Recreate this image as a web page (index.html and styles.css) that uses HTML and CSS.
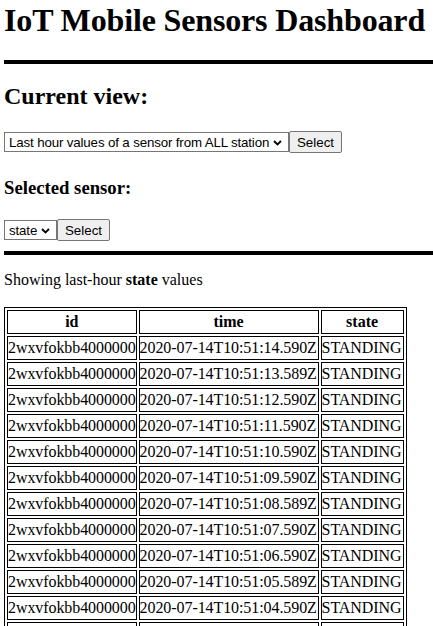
FILE: index.html
```html
<!DOCTYPE html>
<html>
<head>
<meta charset="utf-8">
<link rel="stylesheet" href="styles.css">
</head>
<body>
<h1 class="title">IoT Mobile Sensors Dashboard</h1>
<hr class="rule">
<h2 class="heading">Current view:</h2>
<form class="picker picker-1">
  <span class="select-wrap wide">
    <select class="dropdown"><option>Last hour values of a sensor from ALL station</option></select>
    <svg class="chev" width="9" height="6" viewBox="0 0 9 6"><path d="M1 1 L4.5 4.5 L8 1" fill="none" stroke="#000" stroke-width="1.8"/></svg>
  </span><button type="button" class="btn">Select</button>
</form>
<h3 class="subheading">Selected sensor:</h3>
<form class="picker picker-2">
  <span class="select-wrap narrow">
    <select class="dropdown"><option>state</option></select>
    <svg class="chev" width="9" height="6" viewBox="0 0 9 6"><path d="M1 1 L4.5 4.5 L8 1" fill="none" stroke="#000" stroke-width="1.8"/></svg>
  </span><button type="button" class="btn">Select</button>
</form>
<hr class="rule rule-2">
<p class="caption">Showing last-hour <b>state</b> values</p>
<table class="data">
  <tr><th class="c-id">id</th><th class="c-time">time</th><th class="c-state">state</th></tr>
  <tr><td>2wxvfokbb4000000</td><td>2020-07-14T10:51:14.590Z</td><td>STANDING</td></tr>
  <tr><td>2wxvfokbb4000000</td><td>2020-07-14T10:51:13.589Z</td><td>STANDING</td></tr>
  <tr><td>2wxvfokbb4000000</td><td>2020-07-14T10:51:12.590Z</td><td>STANDING</td></tr>
  <tr><td>2wxvfokbb4000000</td><td>2020-07-14T10:51:11.590Z</td><td>STANDING</td></tr>
  <tr><td>2wxvfokbb4000000</td><td>2020-07-14T10:51:10.590Z</td><td>STANDING</td></tr>
  <tr><td>2wxvfokbb4000000</td><td>2020-07-14T10:51:09.590Z</td><td>STANDING</td></tr>
  <tr><td>2wxvfokbb4000000</td><td>2020-07-14T10:51:08.589Z</td><td>STANDING</td></tr>
  <tr><td>2wxvfokbb4000000</td><td>2020-07-14T10:51:07.590Z</td><td>STANDING</td></tr>
  <tr><td>2wxvfokbb4000000</td><td>2020-07-14T10:51:06.590Z</td><td>STANDING</td></tr>
  <tr><td>2wxvfokbb4000000</td><td>2020-07-14T10:51:05.589Z</td><td>STANDING</td></tr>
  <tr><td>2wxvfokbb4000000</td><td>2020-07-14T10:51:04.590Z</td><td>STANDING</td></tr>
  <tr><td>2wxvfokbb4000000</td><td>2020-07-14T10:51:03.590Z</td><td>STANDING</td></tr>
</table>
</body>
</html>
```
FILE: styles.css
```css
html, body {
  margin: 0;
  padding: 0;
  background: #fff;
  color: #000;
  overflow: hidden;
}
body {
  padding-left: 4px;
  font-family: "Liberation Serif", "Times New Roman", serif;
  font-size: 16px;
}
.title {
  font-size: 32px;
  font-weight: bold;
  margin: 2px 0 0;
  line-height: 37px;
  white-space: nowrap;
  letter-spacing: -0.15px;
}
.rule {
  border: 0;
  height: 4px;
  background: #000;
  margin: 21px 0 0;
}
.heading {
  font-size: 24px;
  font-weight: bold;
  margin: 18px 0 0;
  line-height: 28px;
}
.picker {
  display: flex;
  align-items: center;
  height: 22px;
}
.picker-1 { margin: 21px 0 0; }
.picker-2 { margin: 20px 0 0; }
.select-wrap {
  position: relative;
  display: inline-flex;
  height: 20px;
}
.select-wrap.wide { width: 285px; }
.select-wrap.narrow { width: 53px; }
.dropdown {
  -webkit-appearance: none;
  appearance: none;
  width: 100%;
  font-family: "Liberation Sans", Arial, sans-serif;
  font-size: 13.33px;
  letter-spacing: -0.15px;
  height: 20px;
  border: 1px solid #767676;
  border-radius: 0;
  background: #fff;
  color: #000;
  padding: 0 0 0 4px;
  margin: 0;
  box-sizing: border-box;
}
.chev {
  position: absolute;
  right: 7px;
  top: 8px;
  pointer-events: none;
}
.btn {
  font-family: "Liberation Sans", Arial, sans-serif;
  font-size: 13.33px;
  width: 53px;
  height: 22px;
  box-sizing: border-box;
  border: 1px solid #767676;
  border-radius: 2px;
  background: #efefef;
  color: #000;
  padding: 0;
  margin: 0;
}
.subheading {
  font-size: 18.72px;
  font-weight: bold;
  margin: 24px 0 0;
  line-height: 22px;
}
.rule-2 {
  margin-top: 10px;
}
.caption {
  margin: 16px 0 0;
  line-height: 18px;
}
.data {
  margin-top: 18px;
  border: 1px solid #000;
  border-spacing: 2px;
}
.data th, .data td {
  border: 1px solid #000;
  padding: 1px 0;
  line-height: 20px;
  white-space: nowrap;
}
.data td { letter-spacing: -0.08px; }
.data th {
  font-weight: bold;
  text-align: center;
}
.c-id { width: 127px; }
.c-time { width: 178px; }
.c-state { width: 81px; }
```
